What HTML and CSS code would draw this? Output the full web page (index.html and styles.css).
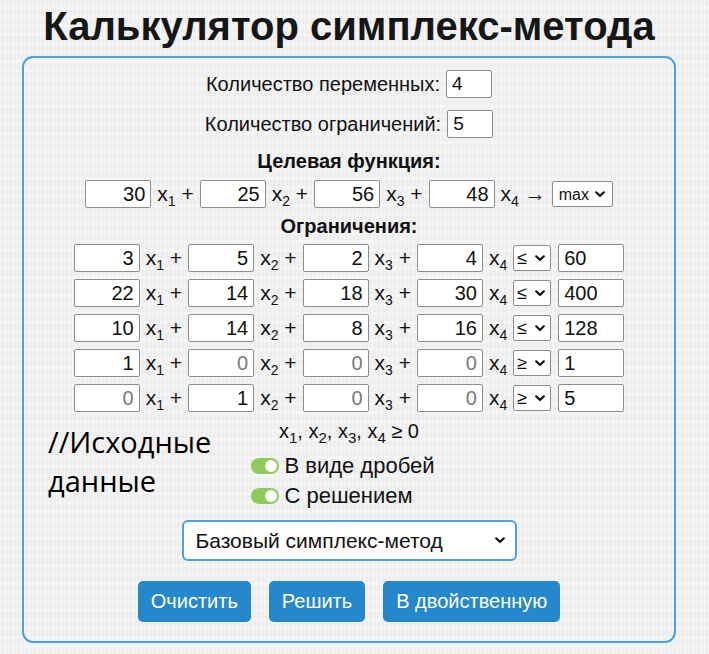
FILE: index.html
```html
<!DOCTYPE html>
<html lang="ru">
<head>
<meta charset="utf-8">
<title>Калькулятор симплекс-метода</title>
<link rel="stylesheet" href="styles.css">
</head>
<body>
<div class="page">
  <h1 class="title">Калькулятор симплекс-метода</h1>
  <div class="panel">
    <div class="count-row">
      <label>Количество переменных:</label>
      <input class="count" type="text" value="4">
    </div>
    <div class="count-row">
      <label>Количество ограничений:</label>
      <input class="count" type="text" value="5">
    </div>

    <div class="heading first">Целевая функция:</div>
    <div class="eq-row">
      <input class="coef" type="text" value="30"><span class="term">x<sub>1</sub> +</span>
      <input class="coef" type="text" value="25"><span class="term">x<sub>2</sub> +</span>
      <input class="coef" type="text" value="56"><span class="term">x<sub>3</sub> +</span>
      <input class="coef" type="text" value="48"><span class="term">x<sub>4</sub> →</span>
      <select class="mode"><option>max</option><option>min</option></select>
    </div>

    <div class="heading second">Ограничения:</div>
    <div class="constraints">
      <div class="eq-row">
        <input class="coef" type="text" value="3"><span class="term">x<sub>1</sub> +</span>
        <input class="coef" type="text" value="5"><span class="term">x<sub>2</sub> +</span>
        <input class="coef" type="text" value="2"><span class="term">x<sub>3</sub> +</span>
        <input class="coef" type="text" value="4"><span class="term">x<sub>4</sub></span>
        <select class="sign"><option>≤</option><option>=</option><option>≥</option></select>
        <input class="rhs" type="text" value="60">
      </div>
      <div class="eq-row">
        <input class="coef" type="text" value="22"><span class="term">x<sub>1</sub> +</span>
        <input class="coef" type="text" value="14"><span class="term">x<sub>2</sub> +</span>
        <input class="coef" type="text" value="18"><span class="term">x<sub>3</sub> +</span>
        <input class="coef" type="text" value="30"><span class="term">x<sub>4</sub></span>
        <select class="sign"><option>≤</option><option>=</option><option>≥</option></select>
        <input class="rhs" type="text" value="400">
      </div>
      <div class="eq-row">
        <input class="coef" type="text" value="10"><span class="term">x<sub>1</sub> +</span>
        <input class="coef" type="text" value="14"><span class="term">x<sub>2</sub> +</span>
        <input class="coef" type="text" value="8"><span class="term">x<sub>3</sub> +</span>
        <input class="coef" type="text" value="16"><span class="term">x<sub>4</sub></span>
        <select class="sign"><option>≤</option><option>=</option><option>≥</option></select>
        <input class="rhs" type="text" value="128">
      </div>
      <div class="eq-row">
        <input class="coef" type="text" value="1"><span class="term">x<sub>1</sub> +</span>
        <input class="coef" type="text" placeholder="0"><span class="term">x<sub>2</sub> +</span>
        <input class="coef" type="text" placeholder="0"><span class="term">x<sub>3</sub> +</span>
        <input class="coef" type="text" placeholder="0"><span class="term">x<sub>4</sub></span>
        <select class="sign"><option>≥</option><option>=</option><option>≤</option></select>
        <input class="rhs" type="text" value="1">
      </div>
      <div class="eq-row">
        <input class="coef" type="text" placeholder="0"><span class="term">x<sub>1</sub> +</span>
        <input class="coef" type="text" value="1"><span class="term">x<sub>2</sub> +</span>
        <input class="coef" type="text" placeholder="0"><span class="term">x<sub>3</sub> +</span>
        <input class="coef" type="text" placeholder="0"><span class="term">x<sub>4</sub></span>
        <select class="sign"><option>≥</option><option>=</option><option>≤</option></select>
        <input class="rhs" type="text" value="5">
      </div>
    </div>

    <div class="nonneg">x<sub>1</sub>, x<sub>2</sub>, x<sub>3</sub>, x<sub>4</sub> ≥ 0</div>

    <div class="toggles">
      <label class="toggle-row"><span class="switch"><span class="knob"></span></span>В виде дробей</label>
      <label class="toggle-row"><span class="switch"><span class="knob"></span></span>С решением</label>
    </div>

    <select class="method">
      <option>Базовый симплекс-метод</option>
      <option>Метод искусственного базиса</option>
    </select>

    <div class="buttons">
      <button class="btn">Очистить</button>
      <button class="btn">Решить</button>
      <button class="btn">В двойственную</button>
    </div>

    <div class="comment">//Исходные<br>данные</div>
  </div>
</div>
</body>
</html>
```

FILE: styles.css
```css
html, body {
  margin: 0;
  padding: 0;
}
body {
  background-color: #f3f3f3;
  background-image:
    repeating-linear-gradient(0deg, rgba(0,0,0,0.018) 0px, rgba(0,0,0,0.018) 6px, transparent 6px, transparent 9px),
    repeating-linear-gradient(90deg, rgba(255,255,255,0.5) 0px, rgba(255,255,255,0.5) 1px, transparent 1px, transparent 4px);
  font-family: "Liberation Sans", Arial, sans-serif;
  color: #111;
  width: 709px;
  height: 654px;
  overflow: hidden;
}
.page {
  width: 654px;
  margin-left: 22px;
}
.title {
  margin: 0;
  padding-top: 2px;
  height: 54px;
  font-size: 40px;
  line-height: 48px;
  font-weight: bold;
  text-align: center;
  color: #161616;
}
.panel {
  position: relative;
  border: 2px solid #47a3e6;
  border-radius: 11px;
  padding: 12px 0 19px;
  display: flex;
  flex-direction: column;
  align-items: center;
}
.panel > * {
  flex-shrink: 0;
}
.count-row {
  display: flex;
  align-items: center;
  gap: 6px;
  font-size: 20px;
  height: 28px;
  margin-bottom: 12px;
}
.count-row + .count-row {
  margin-bottom: 0;
}
input {
  font-family: "Liberation Sans", Arial, sans-serif;
  box-sizing: border-box;
  border: 1px solid #8d8d8d;
  border-radius: 2px;
  background: #fff;
  color: #111;
  outline: none;
  margin: 0;
}
.count {
  width: 46px;
  height: 28px;
  font-size: 19px;
  padding: 0 5px;
}
.heading {
  font-weight: bold;
  font-size: 20px;
  line-height: 22px;
}
.heading.first {
  margin-top: 12px;
  margin-bottom: 8px;
}
.heading.second {
  margin-top: 7px;
  margin-bottom: 7px;
}
.eq-row {
  display: flex;
  align-items: center;
  height: 28px;
}
.constraints {
  display: flex;
  flex-direction: column;
  gap: 7px;
}
.coef {
  width: 66px;
  height: 28px;
  font-size: 20px;
  text-align: right;
  padding: 0 5px;
}
.coef::placeholder {
  color: #7a7a7a;
}
.term {
  font-size: 21px;
  padding: 0 6px;
  white-space: pre;
  line-height: 28px;
}
sub {
  font-size: 14px;
  line-height: 0;
  vertical-align: -5px;
}
select {
  -webkit-appearance: none;
  appearance: none;
  font-family: "Liberation Sans", Arial, sans-serif;
  margin: 0;
  color: #111;
  background-color: #fff;
  background-image: url("data:image/svg+xml;utf8,<svg xmlns='http://www.w3.org/2000/svg' width='10' height='7' viewBox='0 0 10 7'><path d='M1.2 1.3 L5 5 L8.8 1.3' fill='none' stroke='%23111' stroke-width='2.2' stroke-linecap='round' stroke-linejoin='round'/></svg>");
  background-repeat: no-repeat;
  background-size: 10px 7px;
  border: 1px solid #8d8d8d;
  border-radius: 2px;
  box-sizing: border-box;
  outline: none;
}
.mode {
  width: 61px;
  height: 26px;
  font-size: 16px;
  padding: 0 0 0 6px;
  background-position: right 7px center;
}
.sign {
  width: 38px;
  height: 26px;
  font-size: 18px;
  padding: 0 0 0 3px;
  background-position: right 5px center;
}
.rhs {
  width: 66px;
  height: 28px;
  font-size: 20px;
  padding: 0 5px;
  margin-left: 7px;
}
.nonneg {
  margin-top: 8px;
  font-size: 20px;
  line-height: 22px;
}
.nonneg sub {
  font-size: 15px;
  vertical-align: -5px;
}
.toggles {
  margin-top: 9px;
  display: flex;
  flex-direction: column;
  align-items: flex-start;
  padding-right: 12px;
}
.toggle-row {
  display: flex;
  align-items: center;
  gap: 5px;
  height: 30px;
  font-size: 22px;
}
.switch {
  position: relative;
  display: block;
  width: 28px;
  height: 16px;
  border-radius: 8px;
  background: #8ccb5c;
}
.knob {
  position: absolute;
  right: 2px;
  top: 2px;
  width: 12px;
  height: 12px;
  border-radius: 50%;
  background: #fff;
}
.method {
  margin-top: 9px;
  width: 335px;
  height: 41px;
  font-size: 21px;
  padding: 0 30px 0 12px;
  border: 2px solid #47a3e6;
  border-radius: 6px;
  background-position: right 10px center;
}
.buttons {
  margin-top: 20px;
  display: flex;
  gap: 18px;
}
.btn {
  font-family: "Liberation Sans", Arial, sans-serif;
  font-size: 20px;
  height: 41px;
  padding: 0 13px;
  border: none;
  border-radius: 5px;
  background: #2588cc;
  color: #fff;
}
.comment {
  position: absolute;
  left: 24px;
  top: 364px;
  font-family: "Open Sans", "Noto Sans", sans-serif;
  font-size: 29px;
  line-height: 39px;
  color: #000;
}
```
